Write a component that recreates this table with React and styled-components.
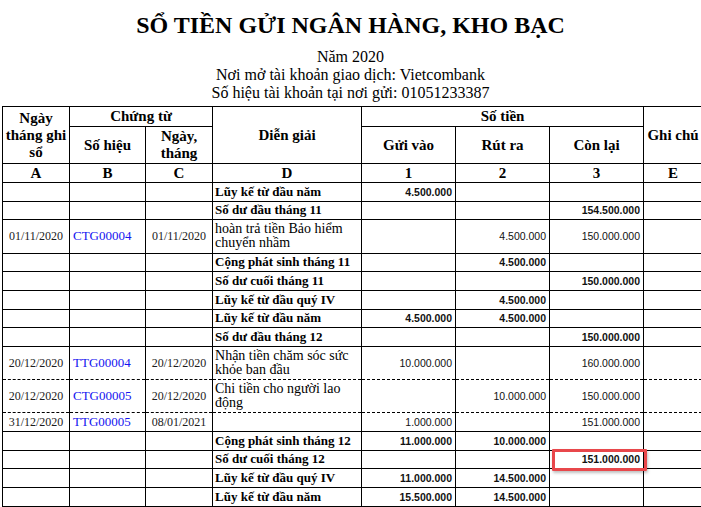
import React from 'react';
import styled, { createGlobalStyle } from 'styled-components';

const GlobalStyle = createGlobalStyle`
  html, body {
    margin: 0;
    padding: 0;
    overflow: hidden;
    background: #fff;
  }
  body {
    font-family: 'Liberation Serif', 'Times New Roman', serif;
    color: #000;
  }
`;

const rows = [
  { desc: 'Lũy kế từ đầu năm', total: true, inAmt: '4.500.000' },
  { desc: 'Số dư đầu tháng 11', total: true, balance: '154.500.000' },
  {
    date: '01/11/2020',
    code: 'CTG00004',
    docDate: '01/11/2020',
    desc: 'hoàn trả tiền Bảo hiểm chuyển nhầm',
    outAmt: '4.500.000',
    balance: '150.000.000',
  },
  { desc: 'Cộng phát sinh tháng 11', total: true, outAmt: '4.500.000' },
  { desc: 'Số dư cuối tháng 11', total: true, balance: '150.000.000' },
  { desc: 'Lũy kế từ đầu quý IV', total: true, outAmt: '4.500.000' },
  { desc: 'Lũy kế từ đầu năm', total: true, inAmt: '4.500.000', outAmt: '4.500.000' },
  { desc: 'Số dư đầu tháng 12', total: true, balance: '150.000.000' },
  {
    date: '20/12/2020',
    code: 'TTG00004',
    docDate: '20/12/2020',
    desc: 'Nhận tiền chăm sóc sức khỏe ban đầu',
    inAmt: '10.000.000',
    balance: '160.000.000',
    dashed: true,
  },
  {
    date: '20/12/2020',
    code: 'CTG00005',
    docDate: '20/12/2020',
    desc: 'Chi tiền cho người lao động',
    outAmt: '10.000.000',
    balance: '150.000.000',
    dashed: true,
  },
  {
    date: '31/12/2020',
    code: 'TTG00005',
    docDate: '08/01/2021',
    desc: '',
    inAmt: '1.000.000',
    balance: '151.000.000',
  },
  { desc: 'Cộng phát sinh tháng 12', total: true, inAmt: '11.000.000', outAmt: '10.000.000' },
  { desc: 'Số dư cuối tháng 12', total: true, balance: '151.000.000', marked: true },
  { desc: 'Lũy kế từ đầu quý IV', total: true, inAmt: '11.000.000', outAmt: '14.500.000' },
  { desc: 'Lũy kế từ đầu năm', total: true, inAmt: '15.500.000', outAmt: '14.500.000' },
];

const colWidths = [67, 76, 67, 149, 94, 94, 94, 59];

const App = () => {
  return (
    <Page>
      <GlobalStyle />
      <Heading>
        <Title>SỔ TIỀN GỬI NGÂN HÀNG, KHO BẠC</Title>
        <SubLine>Năm 2020</SubLine>
        <SubLine>Nơi mở tài khoản giao dịch: Vietcombank</SubLine>
        <SubLine>Số hiệu tài khoản tại nơi gửi: 01051233387</SubLine>
      </Heading>

      <Ledger>
        <colgroup>
          {colWidths.map((w, i) => (
            <col key={i} style={{ width: w }} />
          ))}
        </colgroup>
        <thead>
          <HeadRow $h={20}>
            <HeadCell rowSpan={2}>Ngày tháng ghi sổ</HeadCell>
            <HeadCell colSpan={2}>Chứng từ</HeadCell>
            <HeadCell rowSpan={2}>Diễn giải</HeadCell>
            <HeadCell colSpan={3}>Số tiền</HeadCell>
            <HeadCell rowSpan={2}>Ghi chú</HeadCell>
          </HeadRow>
          <HeadRow $h={37}>
            <HeadCell>Số hiệu</HeadCell>
            <HeadCell>Ngày, tháng</HeadCell>
            <HeadCell>Gửi vào</HeadCell>
            <HeadCell>Rút ra</HeadCell>
            <HeadCell>Còn lại</HeadCell>
          </HeadRow>
          <HeadRow $h={19}>
            {['A', 'B', 'C', 'D', '1', '2', '3', 'E'].map((l) => (
              <HeadCell key={l}>{l}</HeadCell>
            ))}
          </HeadRow>
        </thead>
        <tbody>
          {rows.map((r, i) => (
            <tr key={i}>
              <DateCell $dashed={r.dashed}>{r.date}</DateCell>
              <CodeCell $dashed={r.dashed}>{r.code}</CodeCell>
              <DateCell $dashed={r.dashed}>{r.docDate}</DateCell>
              <DescCell $dashed={r.dashed} $bold={r.total}>
                {r.desc}
              </DescCell>
              <AmountCell $dashed={r.dashed} $bold={r.total}>
                {r.inAmt}
              </AmountCell>
              <AmountCell $dashed={r.dashed} $bold={r.total}>
                {r.outAmt}
              </AmountCell>
              <AmountCell $dashed={r.dashed} $bold={r.total}>
                {r.marked && <Marker />}
                <AmountText>{r.balance}</AmountText>
              </AmountCell>
              <DataCell $dashed={r.dashed} />
            </tr>
          ))}
        </tbody>
      </Ledger>
    </Page>
  );
};

const Page = styled.div`
  width: 701px;
  padding-top: 11px;
`;

const Heading = styled.div`
  text-align: center;
  margin-bottom: 4px;
`;

const Title = styled.h1`
  margin: 0 0 9px;
  font-size: 24px;
  line-height: 28px;
  font-weight: bold;
`;

const SubLine = styled.div`
  font-size: 16px;
  line-height: 18px;
`;

const Ledger = styled.table`
  margin-left: 2px;
  width: 700px;
  table-layout: fixed;
  border-collapse: collapse;
  border-top: 1px solid #000;
  border-left: 1px solid #000;
`;

const HeadRow = styled.tr`
  height: ${(p) => p.$h}px;
`;

const HeadCell = styled.th`
  border: 1px solid #000;
  padding: 0 1px;
  font-size: 15px;
  line-height: 17px;
  font-weight: bold;
  text-align: center;
  vertical-align: middle;
`;

const DataCell = styled.td`
  border-left: 1px solid #000;
  border-right: 1px solid #000;
  border-top: none;
  border-bottom: 1px ${(p) => (p.$dashed ? 'dashed' : 'solid')} #000;
  padding: 1.6px 2px;
  line-height: 14.5px;
  vertical-align: middle;
  height: 14.5px;
`;

const DateCell = styled(DataCell)`
  font-size: 12px;
  text-align: center;
  color: #1b1b1b;
`;

const CodeCell = styled(DataCell)`
  font-size: 13px;
  color: #1414f0;
  padding-left: 3px;
`;

const DescCell = styled(DataCell)`
  font-size: ${(p) => (p.$bold ? '13px' : '14px')};
  font-weight: ${(p) => (p.$bold ? 'bold' : 'normal')};
  text-align: left;
  vertical-align: top;
  padding-right: 4px;
`;

const AmountCell = styled(DataCell)`
  position: relative;
  font-family: 'Liberation Sans', Arial, sans-serif;
  font-size: 10.5px;
  font-weight: ${(p) => (p.$bold ? 'bold' : 'normal')};
  text-align: right;
  padding-right: 3px;
  color: #111;
`;

const AmountText = styled.span`
  position: relative;
`;

const Marker = styled.span`
  position: absolute;
  left: 2px;
  right: -4px;
  top: -2px;
  bottom: -3px;
  border: 3px solid #e8474b;
  border-radius: 1px;
  box-shadow: 1px 2px 3px rgba(0, 0, 0, 0.25);
  pointer-events: none;
`;

export default App;
